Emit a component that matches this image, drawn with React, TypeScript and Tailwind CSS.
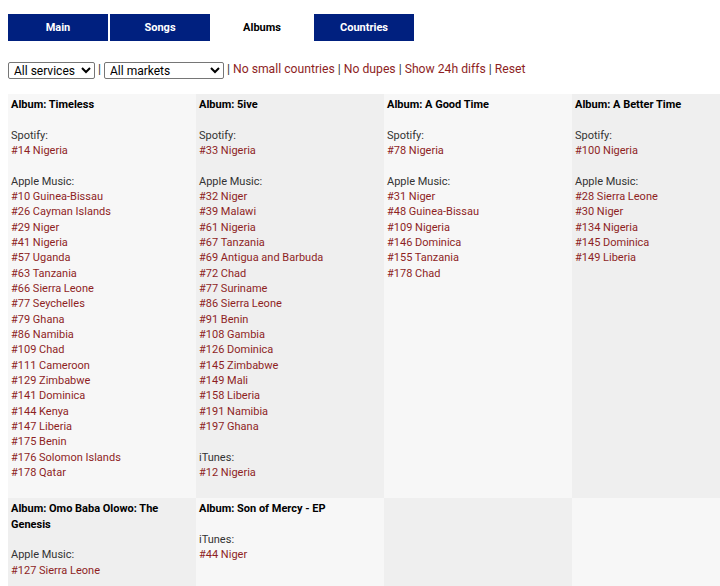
import React from "react";

type Entry = { service: string; ranks: string[] };
type Album = { title: string; entries: Entry[] };

const albums: Album[] = [
  {
    title: "Timeless",
    entries: [
      { service: "Spotify", ranks: ["#14 Nigeria"] },
      {
        service: "Apple Music",
        ranks: [
          "#10 Guinea-Bissau", "#26 Cayman Islands", "#29 Niger", "#41 Nigeria", "#57 Uganda",
          "#63 Tanzania", "#66 Sierra Leone", "#77 Seychelles", "#79 Ghana", "#86 Namibia",
          "#109 Chad", "#111 Cameroon", "#129 Zimbabwe", "#141 Dominica", "#144 Kenya",
          "#147 Liberia", "#175 Benin", "#176 Solomon Islands", "#178 Qatar",
        ],
      },
    ],
  },
  {
    title: "5ive",
    entries: [
      { service: "Spotify", ranks: ["#33 Nigeria"] },
      {
        service: "Apple Music",
        ranks: [
          "#32 Niger", "#39 Malawi", "#61 Nigeria", "#67 Tanzania", "#69 Antigua and Barbuda",
          "#72 Chad", "#77 Suriname", "#86 Sierra Leone", "#91 Benin", "#108 Gambia",
          "#126 Dominica", "#145 Zimbabwe", "#149 Mali", "#158 Liberia", "#191 Namibia", "#197 Ghana",
        ],
      },
      { service: "iTunes", ranks: ["#12 Nigeria"] },
    ],
  },
  {
    title: "A Good Time",
    entries: [
      { service: "Spotify", ranks: ["#78 Nigeria"] },
      {
        service: "Apple Music",
        ranks: ["#31 Niger", "#48 Guinea-Bissau", "#109 Nigeria", "#146 Dominica", "#155 Tanzania", "#178 Chad"],
      },
    ],
  },
  {
    title: "A Better Time",
    entries: [
      { service: "Spotify", ranks: ["#100 Nigeria"] },
      {
        service: "Apple Music",
        ranks: ["#28 Sierra Leone", "#30 Niger", "#134 Nigeria", "#145 Dominica", "#149 Liberia"],
      },
    ],
  },
  {
    title: "Omo Baba Olowo: The Genesis",
    entries: [{ service: "Apple Music", ranks: ["#127 Sierra Leone"] }],
  },
  {
    title: "Son of Mercy - EP",
    entries: [{ service: "iTunes", ranks: ["#44 Niger"] }],
  },
];

const tabs = ["Main", "Songs", "Albums", "Countries"];

function AlbumCell({ album, dark }: { album?: Album; dark: boolean }) {
  return (
    <div className={`px-[3px] pt-[3px] pb-[18px] ${dark ? "bg-[#efefef]" : "bg-[#f7f7f7]"}`}>
      {album && (
        <>
          <div className="font-bold text-black">Album: {album.title}</div>
          {album.entries.map((e) => (
            <div key={e.service} className="mt-[15.33px]">
              <div className="text-[#333]">{e.service}:</div>
              {e.ranks.map((r) => (
                <a key={r} href="#" className="block text-[#8e1f1f]">
                  {r}
                </a>
              ))}
            </div>
          ))}
        </>
      )}
    </div>
  );
}

export default function App() {
  const cells: (Album | undefined)[] = [...albums, undefined, undefined];

  return (
    <div className="min-h-[586px] bg-white p-2 overflow-hidden font-['Roboto',sans-serif] text-[11px] leading-[15.33px] text-[#333]">
      {/* nav tabs */}
      <div className="mt-[6px] flex gap-[2px]">
        {tabs.map((t) => (
          <div
            key={t}
            className={`w-[100px] h-[27px] flex items-center justify-center font-bold ${
              t === "Albums" ? "bg-white text-black" : "bg-[#00207f] text-white"
            }`}
          >
            {t}
          </div>
        ))}
      </div>

      {/* filters */}
      <div className="mt-[20px] flex items-center gap-[3px] h-[18px] text-[12.2px]">
        <select className="h-[17px] w-[87px] border border-[#767676] rounded-[2px] text-[12px] leading-none pl-[1px] bg-white text-black">
          <option>All services</option>
        </select>
        <span>|</span>
        <select className="h-[17px] w-[120px] border border-[#767676] rounded-[2px] text-[12px] leading-none pl-[1px] bg-white text-black">
          <option>All markets</option>
        </select>
        <span>|</span>
        <a href="#" className="text-[#8e1f1f]">No small countries</a>
        <span>|</span>
        <a href="#" className="text-[#8e1f1f]">No dupes</a>
        <span>|</span>
        <a href="#" className="text-[#8e1f1f]">Show 24h diffs</a>
        <span>|</span>
        <a href="#" className="text-[#8e1f1f]">Reset</a>
      </div>

      {/* album grid */}
      <div className="mt-[15px] grid grid-cols-[188px_188px_188px_188px] w-[752px]">
        {cells.map((a, i) => {
          const row = Math.floor(i / 4);
          const col = i % 4;
          return <AlbumCell key={i} album={a} dark={(row + col) % 2 === 1} />;
        })}
      </div>
    </div>
  );
}
